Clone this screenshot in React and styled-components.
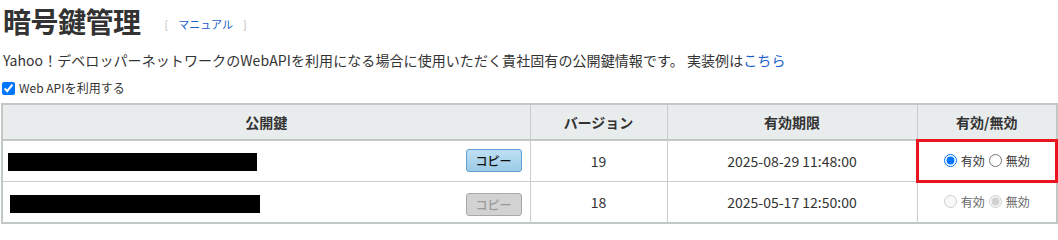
import styled, { createGlobalStyle } from "styled-components";

const GlobalStyle = createGlobalStyle`
  body {
    margin: 0;
    background: #fff;
    color: #333;
    font-family: "Noto Sans CJK JP", "Noto Sans", sans-serif;
  }
`;

const keys = [
  { id: 1, barWidth: 249, barShift: 0, version: 19, expires: "2025-08-29 11:48:00", active: true },
  { id: 2, barWidth: 250, barShift: 2, version: 18, expires: "2025-05-17 12:50:00", active: false },
];

export default function App() {
  return (
    <Page>
      <GlobalStyle />
      <TitleRow>
        <Title>暗号鍵管理</Title>
        <Manual>
          <Bracket>[</Bracket>
          <Link href="#">マニュアル</Link>
          <Bracket>]</Bracket>
        </Manual>
      </TitleRow>
      <Description>
        Yahoo！デベロッパーネットワークのWebAPIを利用になる場合に使用いただく貴社固有の公開鍵情報です。
        実装例は<Link href="#">こちら</Link>
      </Description>
      <CheckLabel>
        <input type="checkbox" defaultChecked />
        Web APIを利用する
      </CheckLabel>
      <KeyTable>
        <colgroup>
          <col style={{ width: 528 }} />
          <col style={{ width: 137 }} />
          <col style={{ width: 250 }} />
          <col style={{ width: 140 }} />
        </colgroup>
        <thead>
          <tr>
            <Th>公開鍵</Th>
            <Th>バージョン</Th>
            <Th>有効期限</Th>
            <Th>有効/無効</Th>
          </tr>
        </thead>
        <tbody>
          {keys.map((k) => (
            <tr key={k.id}>
              <Td>
                <KeyCell>
                  <Masked $width={k.barWidth} $shift={k.barShift} />
                  <CopyButton disabled={!k.active}>コピー</CopyButton>
                </KeyCell>
              </Td>
              <Td $center>{k.version}</Td>
              <Td $center>{k.expires}</Td>
              <Td $center $highlight={k.active}>
                <RadioGroup>
                  <RadioLabel $disabled={!k.active}>
                    <input type="radio" name={`st${k.id}`} defaultChecked={k.active} disabled={!k.active} />
                    有効
                  </RadioLabel>
                  <RadioLabel $disabled={!k.active}>
                    <input type="radio" name={`st${k.id}`} defaultChecked={!k.active} disabled={!k.active} />
                    無効
                  </RadioLabel>
                </RadioGroup>
              </Td>
            </tr>
          ))}
        </tbody>
      </KeyTable>
    </Page>
  );
}

const Page = styled.div`
  padding: 0 2px 0 1px;
`;

const TitleRow = styled.div`
  display: flex;
  align-items: flex-end;
  gap: 24px;
  height: 40px;
  padding-left: 2px;
`;

const Title = styled.h1`
  margin: 0;
  font-size: 28px;
  font-weight: 700;
  line-height: 38px;
  color: #333;
  letter-spacing: -0.5px;
`;

const Manual = styled.span`
  display: flex;
  gap: 10px;
  font-size: 11px;
  line-height: 16px;
  margin-bottom: 8px;
`;

const Bracket = styled.span`
  color: #bbb;
`;

const Link = styled.a`
  color: #1a5fcc;
  text-decoration: none;
`;

const Description = styled.p`
  margin: 0;
  padding: 10px 0 0 2px;
  font-size: 14px;
  letter-spacing: 0.08px;
  line-height: 20px;
  color: #333;
  white-space: nowrap;
`;

const CheckLabel = styled.label`
  display: flex;
  align-items: center;
  gap: 4px;
  margin-top: 9px;
  padding-left: 1px;
  font-size: 12px;
  line-height: 18px;
  color: #333;

  input {
    margin: 0;
    width: 13px;
    height: 13px;
  }
`;

const KeyTable = styled.table`
  margin-top: 6px;
  width: 1055px;
  table-layout: fixed;
  border-collapse: collapse;
  border: 2px solid #c2c8c6;
`;

const Th = styled.th`
  height: 34px;
  padding: 0;
  background: #e9eced;
  border: 1px solid #c6cbca;
  border-bottom: 2px solid #c2c8c6;
  font-size: 14px;
  font-weight: 700;
  color: #333;
  text-align: center;
`;

const Td = styled.td`
  height: 40px;
  padding: 0;
  border: 1px solid #ccc;
  font-size: 14px;
  color: #333;
  text-align: ${(p) => (p.$center ? "center" : "left")};
  outline: ${(p) => (p.$highlight ? "3px solid #e8141f" : "none")};
  outline-offset: -2px;
`;

const KeyCell = styled.div`
  display: flex;
  align-items: center;
  justify-content: space-between;
  padding: 0 8px 0 5px;
`;

const Masked = styled.div`
  width: ${(p) => p.$width}px;
  height: 18px;
  margin-left: ${(p) => p.$shift}px;
  margin-top: ${(p) => (p.$shift ? 4 : 2)}px;
  background: #000;
`;

const CopyButton = styled.button`
  width: 56px;
  height: 23px;
  padding: 0;
  margin-top: ${(p) => (p.disabled ? 4 : -1)}px;
  border-radius: 3px;
  font-family: inherit;
  font-size: 12px;
  font-weight: 500;
  color: ${(p) => (p.disabled ? "#9a9a9a" : "#111")};
  border: 1px solid ${(p) => (p.disabled ? "#a8a8a8" : "#5f9fd3")};
  background: ${(p) =>
    p.disabled
      ? "#d2d2d2"
      : "linear-gradient(#bfe0f3, #9bcbe6)"};
`;

const RadioGroup = styled.div`
  display: inline-flex;
  align-items: center;
  gap: 4px;
`;

const RadioLabel = styled.label`
  display: inline-flex;
  align-items: center;
  gap: 4px;
  font-size: 12px;
  color: ${(p) => (p.$disabled ? "#666" : "#333")};

  input {
    margin: 0;
    width: 13px;
    height: 13px;
  }
`;
